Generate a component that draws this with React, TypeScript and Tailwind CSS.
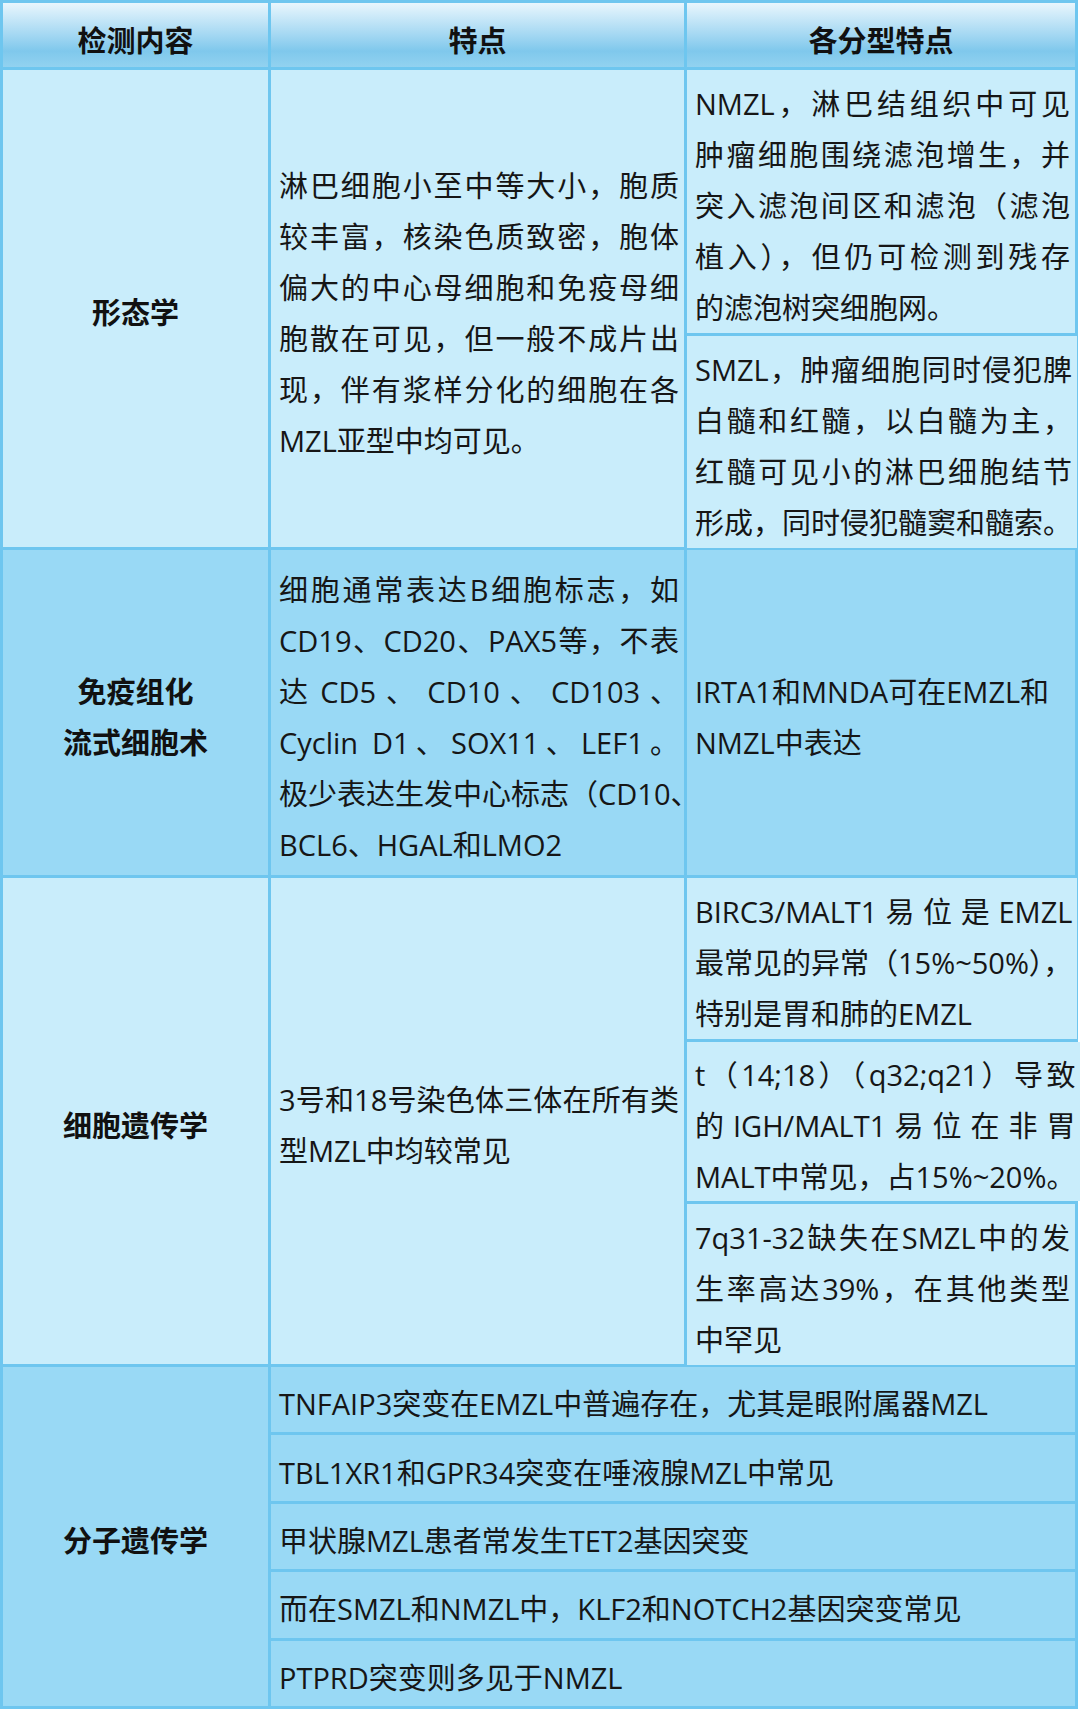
const LIGHT = "bg-[#c9edfb]";
const DARK = "bg-[#99d9f5]";

type LinesProps = { lines: string[]; justify?: boolean };

// each line rendered on its own, non-final lines stretched like the source table
function Lines({ lines, justify = true }: LinesProps) {
  return (
    <div className="w-full">
      {lines.map((line, i) => (
        <div
          key={i}
          className={
            justify && i < lines.length - 1
              ? "leading-[51px] whitespace-nowrap text-justify [text-align-last:justify]"
              : "leading-[51px] whitespace-nowrap"
          }
        >
          {line}
        </div>
      ))}
    </div>
  );
}

function LabelCell({ lines, bg }: { lines: string[]; bg: string }) {
  return (
    <div className={`${bg} flex flex-col items-center justify-center pt-2 font-bold text-[29px] text-[#111]`}>
      {lines.map((l, i) => (
        <div key={i} className="leading-[51px]">
          {l}
        </div>
      ))}
    </div>
  );
}

function TextCell({ lines, bg, justify }: { lines: string[]; bg: string; justify?: boolean }) {
  return (
    <div className={`${bg} flex flex-1 items-center pl-2 pr-[5px] pt-2`}>
      <Lines lines={lines} justify={justify} />
    </div>
  );
}

export default function App() {
  const molecular = [
    "TNFAIP3突变在EMZL中普遍存在，尤其是眼附属器MZL",
    "TBL1XR1和GPR34突变在唾液腺MZL中常见",
    "甲状腺MZL患者常发生TET2基因突变",
    "而在SMZL和NMZL中，KLF2和NOTCH2基因突变常见",
    "PTPRD突变则多见于NMZL",
  ];

  return (
    <div
      className="w-[1080px] min-h-[1714px] bg-white text-[#161616] text-[29px]"
      style={{ fontFamily: '"Open Sans", "Noto Sans CJK SC", sans-serif' }}
    >
      <div className="w-[1078px] bg-[#6ec6ef] p-[3px] grid grid-cols-[265px_413px_388px] grid-rows-[64px_477px_325px_486px_339px] gap-[3px]">
        {/* header */}
        {["检测内容", "特点", "各分型特点"].map((h) => (
          <div
            key={h}
            className="flex items-center justify-center pt-3 font-bold text-[29px] text-[#111] bg-linear-to-b from-[#e8f6fd] via-[#7fc8ec] via-75% to-[#92d2f0]"
          >
            {h}
          </div>
        ))}

        {/* 形态学 */}
        <LabelCell lines={["形态学"]} bg={LIGHT} />
        <TextCell
          bg={LIGHT}
          lines={[
            "淋巴细胞小至中等大小，胞质",
            "较丰富，核染色质致密，胞体",
            "偏大的中心母细胞和免疫母细",
            "胞散在可见，但一般不成片出",
            "现，伴有浆样分化的细胞在各",
            "MZL亚型中均可见。",
          ]}
        />
        <div className="flex flex-col gap-[3px]">
          <div className="h-[264px] flex">
            <TextCell
              bg={LIGHT}
              lines={[
                "NMZL，淋巴结组织中可见",
                "肿瘤细胞围绕滤泡增生，并",
                "突入滤泡间区和滤泡（滤泡",
                "植入），但仍可检测到残存",
                "的滤泡树突细胞网。",
              ]}
            />
          </div>
          <div className="flex-1 flex">
            <TextCell
              bg={LIGHT}
              lines={[
                "SMZL，肿瘤细胞同时侵犯脾",
                "白髓和红髓，以白髓为主，",
                "红髓可见小的淋巴细胞结节",
                "形成，同时侵犯髓窦和髓索。",
              ]}
            />
          </div>
        </div>

        {/* 免疫组化 */}
        <LabelCell lines={["免疫组化", "流式细胞术"]} bg={DARK} />
        <TextCell
          bg={DARK}
          lines={[
            "细胞通常表达B细胞标志，如",
            "CD19、CD20、PAX5等，不表",
            "达 CD5 、 CD10 、 CD103 、",
            "Cyclin  D1、SOX11、LEF1。",
            "极少表达生发中心标志（CD10、",
            "BCL6、HGAL和LMO2",
          ]}
        />
        <TextCell bg={DARK} justify={false} lines={["IRTA1和MNDA可在EMZL和", "NMZL中表达"]} />

        {/* 细胞遗传学 */}
        <LabelCell lines={["细胞遗传学"]} bg={LIGHT} />
        <TextCell bg={LIGHT} lines={["3号和18号染色体三体在所有类", "型MZL中均较常见"]} />
        <div className="flex flex-col gap-[3px]">
          <div className="h-[162px] flex">
            <TextCell
              bg={LIGHT}
              lines={["BIRC3/MALT1 易 位 是 EMZL", "最常见的异常（15%~50%），", "特别是胃和肺的EMZL"]}
            />
          </div>
          <div className="h-[159px] flex">
            <TextCell
              bg={LIGHT}
              lines={["t（14;18）（q32;q21）导致", "的 IGH/MALT1 易 位 在 非 胃", "MALT中常见，占15%~20%。"]}
            />
          </div>
          <div className="flex-1 flex">
            <TextCell bg={LIGHT} lines={["7q31-32缺失在SMZL中的发", "生率高达39%，在其他类型", "中罕见"]} />
          </div>
        </div>

        {/* 分子遗传学 */}
        <LabelCell lines={["分子遗传学"]} bg={DARK} />
        <div className="col-span-2 flex flex-col gap-[3px]">
          {molecular.map((m) => (
            <div key={m} className={`${DARK} flex-1 flex items-center px-2 pt-2`}>
              <div className="leading-[51px] whitespace-nowrap">{m}</div>
            </div>
          ))}
        </div>
      </div>
    </div>
  );
}
